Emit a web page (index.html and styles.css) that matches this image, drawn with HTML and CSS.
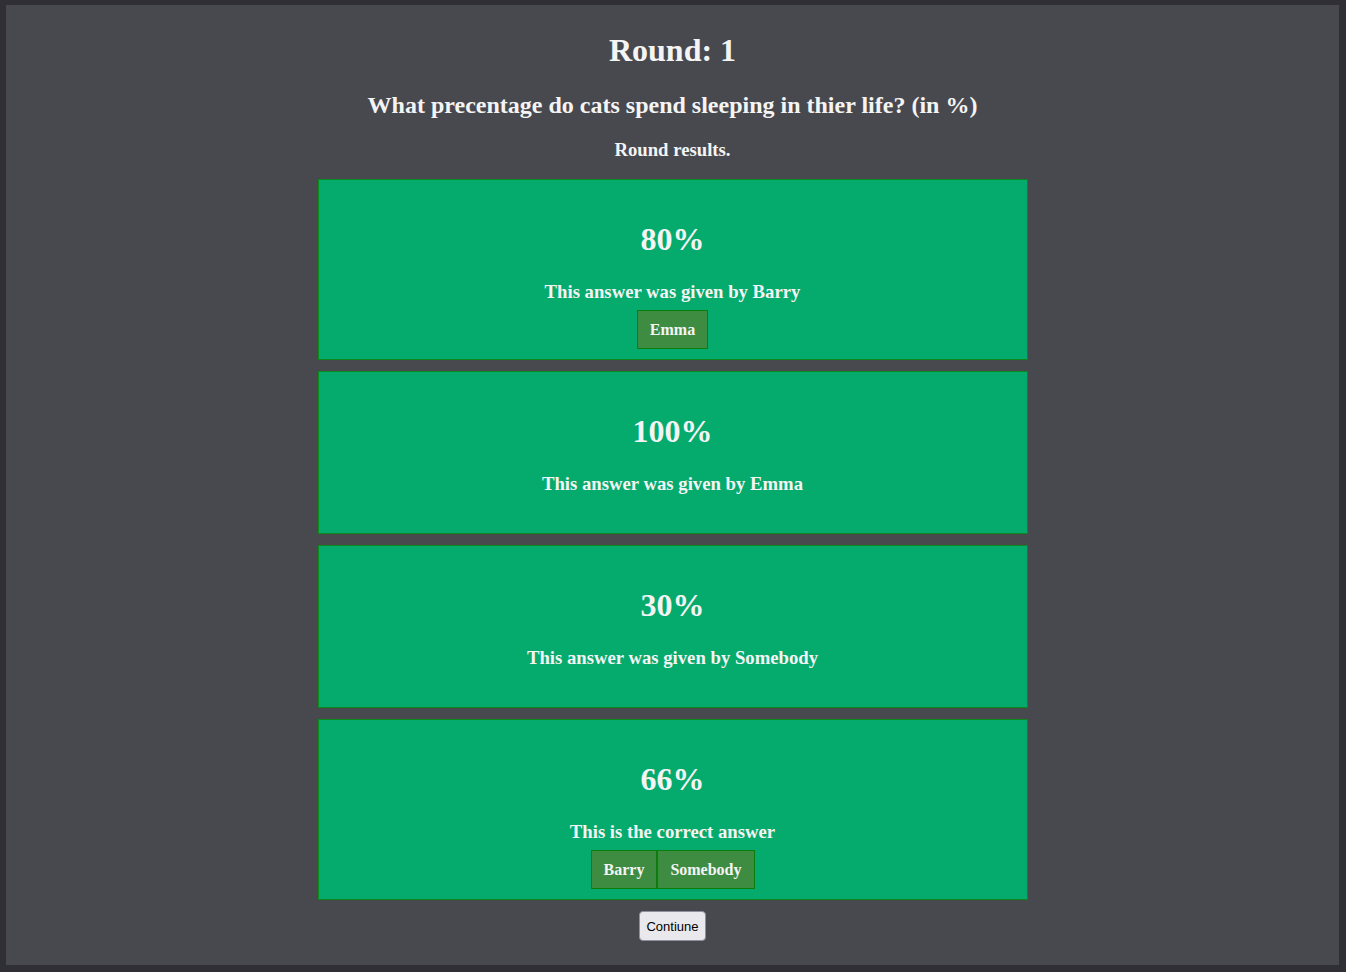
FILE: index.html
```html
<!DOCTYPE html>
<html lang="en">
<head>
<meta charset="utf-8">
<title>Round results</title>
<link rel="stylesheet" href="styles.css">
</head>
<body>
<main class="panel">
  <h1 class="round-title">Round: 1</h1>
  <h2 class="question">What precentage do cats spend sleeping in thier life? (in %)</h2>
  <h3 class="subtitle">Round results.</h3>
  <section class="results">
    <div class="card has-voters">
      <h1 class="pct">80%</h1>
      <p class="given">This answer was given by Barry</p>
      <div class="voters"><span class="chip">Emma</span></div>
    </div>
    <div class="card">
      <h1 class="pct">100%</h1>
      <p class="given">This answer was given by Emma</p>
    </div>
    <div class="card">
      <h1 class="pct">30%</h1>
      <p class="given">This answer was given by Somebody</p>
    </div>
    <div class="card has-voters">
      <h1 class="pct">66%</h1>
      <p class="given">This is the correct answer</p>
      <div class="voters"><span class="chip">Barry</span><span class="chip">Somebody</span></div>
    </div>
  </section>
  <div class="actions"><button class="continue" type="button">Contiune</button></div>
</main>
</body>
</html>
```
FILE: styles.css
```css
html, body {
  margin: 0;
  padding: 0;
}
body {
  background: #2f2f35;
  font-family: "Liberation Serif", "Times New Roman", serif;
  color: #f4f4f4;
}
.panel {
  margin: 5px 7px 0 6px;
  height: 960px;
  background: #48494f;
  display: flex;
  flex-direction: column;
  align-items: center;
  box-sizing: border-box;
  padding-top: 27px;
}
.round-title {
  margin: 0;
  font-size: 32px;
  line-height: 37px;
  font-weight: bold;
}
.question {
  margin: 22px 0 0;
  font-size: 24px;
  line-height: 28px;
  font-weight: bold;
}
.subtitle {
  margin: 20px 0 0;
  font-size: 18.72px;
  line-height: 22px;
  font-weight: bold;
}
.results {
  margin-top: 18px;
  width: 710px;
  display: flex;
  flex-direction: column;
  gap: 11px;
}
.card {
  background: #05aa6d;
  border: 1px solid #0b8a1b;
  padding: 41px 0 9px;
  text-align: center;
}
.card.has-voters {
  padding-bottom: 10px;
}
.pct {
  margin: 0;
  font-size: 32px;
  line-height: 37px;
  font-weight: bold;
}
.given {
  margin: 23px 0 30px;
  font-size: 18.72px;
  line-height: 21px;
  font-weight: bold;
}
.has-voters .given {
  margin-bottom: 8px;
}
.voters {
  display: flex;
  justify-content: center;
}
.chip {
  background: #3e8c41;
  border: 1px solid #0b7d0d;
  padding: 9px 12px;
  font-size: 16px;
  line-height: 19px;
  font-weight: bold;
}
.actions {
  margin-top: 11px;
}
.continue {
  font-family: "Liberation Sans", Arial, sans-serif;
  font-size: 13px;
  color: #000;
  background: #e9e9ed;
  border: 1px solid #8f8f9d;
  border-radius: 4px;
  height: 30px;
  padding: 0 6px;
}
```
